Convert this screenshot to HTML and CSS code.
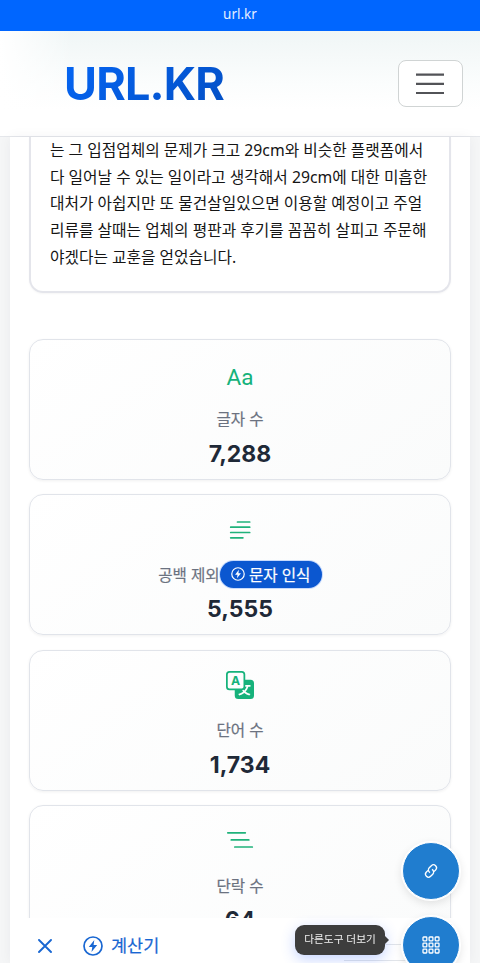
FILE: index.html
```html
<!DOCTYPE html>
<html lang="ko">
<head>
<meta charset="utf-8">
<title>URL.KR</title>
<link rel="stylesheet" href="styles.css">
</head>
<body>
<div class="address">url.kr</div>
<header class="header">
  <a class="brand">URL.KR</a>
  <button class="menu" aria-label="메뉴"><svg width="28" height="22" viewBox="0 0 28 22"><path d="M0 1.600h28M0 10.800h28M0 20h28"/></svg></button>
</header>
<main class="panel">
  <div class="editor">
    <p>는 그 입점업체의 문제가 크고 29cm와 비슷한 플랫폼에서</p>
    <p>다 일어날 수 있는 일이라고 생각해서 29cm에 대한 미흡한</p>
    <p>대처가 아쉽지만 또 물건살일있으면 이용할 예정이고 주얼</p>
    <p>리류를 살때는 업체의 평판과 후기를 꼼꼼히 살피고 주문해</p>
    <p>야겠다는 교훈을 얻었습니다.</p>
  </div>
  <div class="stats">
    <section class="card">
      <div class="icon"><span class="aa">Aa</span></div>
      <div class="label">글자 수</div>
      <div class="value">7,288</div>
    </section>
    <section class="card">
      <div class="icon"><svg width="30" height="30" viewBox="0 0 30 30"><path class="line" d="M12.500 7h12.200M5.700 12.200h19M5.700 17.500h19M5.700 22.800h12.200"/></svg></div>
      <div class="label">공백 제외<span class="pill"><svg width="14" height="14" viewBox="0 0 20 20"><circle cx="10" cy="10" r="8.900"/><path d="M11.300 4 5.800 11h3.500L8.500 16l5.700-7.100h-3.600z"/></svg>문자 인식</span></div>
      <div class="value">5,555</div>
    </section>
    <section class="card">
      <div class="icon"><svg class="translate" width="28" height="28" viewBox="0 0 16 16"><path class="solid" d="M0 2a2 2 0 0 1 2-2h7a2 2 0 0 1 2 2v3h3a2 2 0 0 1 2 2v7a2 2 0 0 1-2 2H7a2 2 0 0 1-2-2v-3H2a2 2 0 0 1-2-2zm2-1a1 1 0 0 0-1 1v7a1 1 0 0 0 1 1h7a1 1 0 0 0 1-1V2a1 1 0 0 0-1-1zm7.138 9.995q.289.451.63.846c-.748.575-1.673 1.001-2.768 1.292.178.217.451.635.555.867 1.125-.359 2.080-.844 2.886-1.494.777.665 1.739 1.165 2.930 1.472.133-.254.414-.673.629-.89-1.125-.253-2.057-.694-2.820-1.284.681-.747 1.222-1.651 1.621-2.757H14V8h-3v1.047h.765c-.318.844-.74 1.546-1.272 2.130a6 6 0 0 1-.415-.492 2 2 0 0 1-.94.31"/><text class="letter" x="5.500" y="8" text-anchor="middle">A</text></svg></div>
      <div class="label">단어 수</div>
      <div class="value">1,734</div>
    </section>
    <section class="card">
      <div class="icon"><svg width="30" height="30" viewBox="0 0 30 30"><path class="line" d="M2.800 6.800h17.500M6.300 13.900h17.500M9.800 21h17.500"/></svg></div>
      <div class="label">단락 수</div>
      <div class="value">64</div>
    </section>
  </div>
</main>
<nav class="dock">
  <svg class="close" width="14" height="14" viewBox="0 0 14 14"><path d="m1 1 12 12M13 1 1 13"/></svg>
  <svg class="bolt" width="20" height="20" viewBox="0 0 20 20"><circle cx="10" cy="10" r="9"/><path d="M11.300 4 5.800 11h3.500L8.500 16l5.700-7.100h-3.600z"/></svg>
  <span>계산기</span>
</nav>
<div class="rails"></div>
<div class="tip">다른도구 더보기</div>
<div class="fabs">
  <a class="fab"><svg width="16" height="16" viewBox="0 0 16 16"><path d="M6.354 5.500H4a3 3 0 0 0 0 6h3a3 3 0 0 0 2.830-4M9.646 10.500H12a3 3 0 1 0 0-6H9a3 3 0 0 0-2.830 4" transform="rotate(-45 8 8)"/></svg></a>
  <a class="fab"><svg width="18" height="18" viewBox="0 0 18 18"><g><rect x="1" y="1" width="3.800" height="3.800" rx=".7"/><rect x="7.100" y="1" width="3.800" height="3.800" rx=".7"/><rect x="13.200" y="1" width="3.800" height="3.800" rx=".7"/><rect x="1" y="7.100" width="3.800" height="3.800" rx=".7"/><rect x="7.100" y="7.100" width="3.800" height="3.800" rx=".7"/><rect x="13.200" y="7.100" width="3.800" height="3.800" rx=".7"/><rect x="1" y="13.200" width="3.800" height="3.800" rx=".7"/><rect x="7.100" y="13.200" width="3.800" height="3.800" rx=".7"/><rect x="13.200" y="13.200" width="3.800" height="3.800" rx=".7"/></g></svg></a>
</div>
</body>
</html>
```
FILE: styles.css
```css
* { box-sizing: border-box; }
body {
  margin: 0;
  height: 963px;
  overflow: hidden;
  background: #f5f6f7;
  font-family: "Noto Sans", "Noto Sans CJK KR", sans-serif;
}
svg { display: block; fill: none; }
.address {
  height: 31px;
  background: #0066ff;
  color: #e4efff;
  font-size: 13.500px;
  line-height: 28px;
  text-align: center;
}
.header {
  height: 106px;
  display: flex;
  align-items: center;
  justify-content: space-between;
  padding: 0 17.500px 0 64px;
  border-bottom: 1px solid #e5e7eb;
  background: linear-gradient(90deg, #fff, transparent 15%), linear-gradient(180deg, #f0f6f6, #fbfdfd 50%, #fff 75%);
}
.brand {
  font: 700 45px/60px Inter, sans-serif;
  letter-spacing: -.800px;
  background: linear-gradient(135deg, #0566f5, #034fc4);
  -webkit-background-clip: text;
  background-clip: text;
  color: transparent;
}
.menu {
  width: 65px;
  height: 47px;
  display: grid;
  place-items: center;
  padding: 0;
  background: #fff;
  border: 1px solid #d0d4d4;
  border-radius: 8px;
}
.menu path { stroke: #525357; stroke-width: 2.200; }
.panel {
  margin: 0 10px;
  height: 826px;
  overflow: hidden;
  padding: 0 19px;
  background: #fff;
  box-shadow: 0 0 12px rgba(30, 40, 60, .05);
}
.editor {
  height: 156px;
  padding-left: 19px;
  border: 2px solid #e4e5eb;
  border-top: 0;
  border-radius: 0 0 14px 14px;
  box-shadow: 0 1px 2px rgba(0, 0, 0, .04);
  color: #151515;
  font-size: 15.750px;
}
.editor p {
  margin: 0;
  height: 26.700px;
  line-height: 26.700px;
  white-space: nowrap;
}
.stats {
  margin-top: 45.500px;
  display: grid;
  gap: 14.500px;
}
.card {
  height: 141px;
  padding-top: 17px;
  display: flex;
  flex-direction: column;
  align-items: center;
  border: 1px solid #e1e4ea;
  border-radius: 14px;
  background: linear-gradient(145deg, #fff, #fafbfb);
  box-shadow: 0 1px 3px rgba(0, 0, 0, .06);
}
.icon {
  height: 36px;
  display: grid;
  place-items: center;
}
.translate { position: relative; top: -1px; }
.line { stroke: #20b27b; stroke-width: 1.700; stroke-linecap: round; }
.solid { fill: #16b27b; }
.letter { fill: #16b27b; font: 700 7px Inter, sans-serif; }
.aa { color: #16b27b; font: 22.500px/36px Roboto, sans-serif; position: relative; top: 2px; }
.label {
  height: 28px;
  margin-top: 12px;
  display: flex;
  align-items: center;
  color: #6b7280;
  font-size: 15.600px;
  -webkit-text-stroke: .2px currentColor;
}
.pill {
  height: 27px;
  width: 102px;
  margin-left: 0;
  display: flex;
  align-items: center;
  justify-content: center;
  gap: 4px;
  border-radius: 14px;
  background: #0b57d0;
  box-shadow: 0 0 0 1px #c7dafc;
  color: #fff;
}
.pill circle, .bolt circle { stroke: currentColor; stroke-width: 1.700; }
.pill path, .bolt path { fill: currentColor; }
.value {
  margin-top: 5px;
  color: #1f2937;
  font: 700 23px/32px Inter, sans-serif;
}
.dock {
  position: fixed;
  left: 11px;
  right: 11px;
  bottom: 0;
  height: 45px;
  padding: 10px 27px 0;
  display: flex;
  align-items: center;
  background: #fff;
  color: #1967d2;
  font-size: 17.500px;
  -webkit-text-stroke: .2px currentColor;
}
.dock span { position: relative; top: -1px; }
.close { stroke: currentColor; stroke-width: 1.900; stroke-linecap: round; }
.bolt { margin: 0 8px 0 31px; }
.rails {
  position: fixed;
  left: 344px;
  bottom: 2px;
  width: 80px;
  height: 17px;
  border: solid #e2e5e9;
  border-width: 1px 0;
}
.tip {
  position: fixed;
  left: 295px;
  top: 925px;
  width: 90px;
  height: 30px;
  border-radius: 9px;
  background: #3d3d3d;
  color: #f0f0f0;
  box-shadow: 0 4px 14px rgba(60, 110, 255, .3);
  font-size: 10.700px;
  line-height: 28px;
  text-align: center;
}
.tip::after {
  content: "";
  position: absolute;
  left: 90px;
  top: 11px;
  border: 4px solid transparent;
  border-left-color: #3d3d3d;
}
.fabs {
  position: fixed;
  left: 402px;
  top: 842px;
  display: grid;
  gap: 16px;
}
.fab {
  width: 58px;
  height: 58px;
  display: grid;
  place-items: center;
  border: 1px solid #fff;
  border-radius: 50%;
  background: #207dcf;
  box-shadow: 0 0 0 1px #fff, 0 3px 10px rgba(0, 0, 0, .12);
}
.fab svg { stroke: #fff; stroke-width: 1.300; overflow: visible; }
```
